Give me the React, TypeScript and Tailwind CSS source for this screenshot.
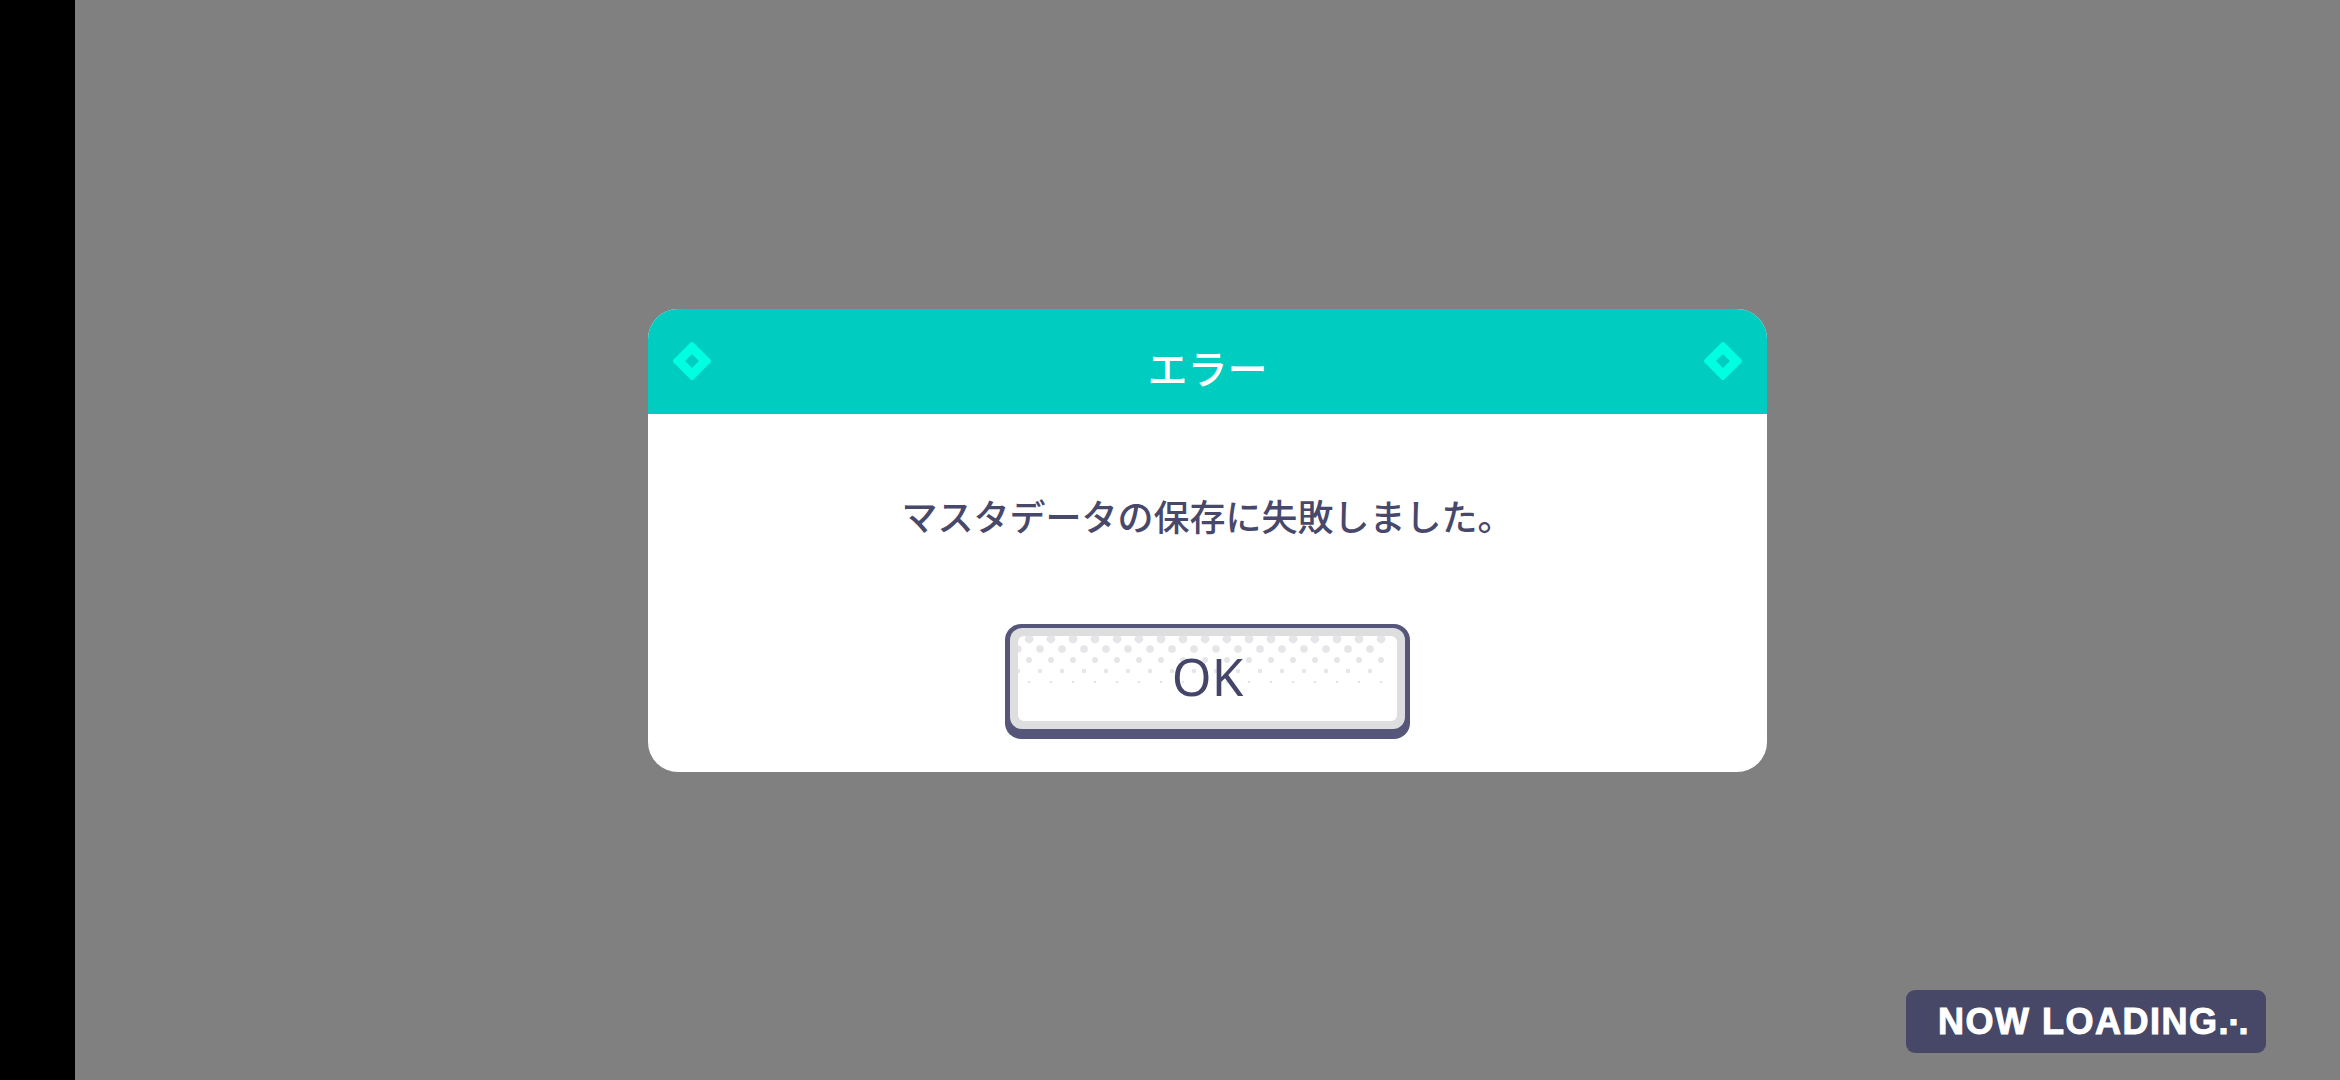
import React from "react";

function Diamond() {
  return (
    <svg width="40" height="40" viewBox="0 0 40 40">
      <path d="M20 3 L37 20 L20 37 L3 20 Z" fill="#00FFE1" strokeLinejoin="round" stroke="#00FFE1" strokeWidth="4" />
      <path d="M20 13 L27 20 L20 27 L13 20 Z" fill="#00CDBF" />
    </svg>
  );
}

function Dots() {
  const rows = [
    { y: 3, r: 4.4 },
    { y: 13, r: 3.8 },
    { y: 24, r: 3 },
    { y: 35, r: 2.2 },
    { y: 46, r: 1.3 },
  ];
  const circles: React.ReactNode[] = [];
  rows.forEach((row, i) => {
    const off = i % 2 === 0 ? 0 : 11;
    for (let x = -11 + off; x < 380; x += 22) {
      circles.push(<circle key={`${i}-${x}`} cx={x} cy={row.y} r={row.r} fill="#E6E6EA" />);
    }
  });
  return (
    <svg className="absolute left-0 top-0" width="369" height="60" viewBox="0 0 369 60">
      {circles}
    </svg>
  );
}

export default function App() {
  const loadFont = { fontFamily: '"Liberation Sans", Arial, sans-serif' };
  return (
    <div className="flex w-[2340px] h-[1080px] overflow-hidden" style={{ fontFamily: '"Noto Sans", "Noto Sans CJK JP", sans-serif' }}>
      <div className="w-[75px] h-full bg-black shrink-0" />
      <div className="relative flex-1 h-full bg-[#808080] flex items-center justify-center">
        <div className="w-[1119px] h-[463px] rounded-[30px] overflow-hidden bg-white flex flex-col">
          <div className="h-[105px] bg-[#00CDBF] flex items-center justify-between px-[24px] shrink-0">
            <Diamond />
            <div className="text-white text-[40px] font-medium leading-none pt-[12px]" style={{ fontFamily: '"Noto Sans CJK JP", sans-serif' }}>エラー</div>
            <Diamond />
          </div>
          <div className="flex flex-col items-center pt-[76px]">
            <div className="text-[#48486A] text-[36px] font-medium leading-[50px]" style={{ fontFamily: '"Noto Sans CJK JP", sans-serif' }}>
              マスタデータの保存に失敗しました。
            </div>
            <div className="mt-[84px] w-[405px] h-[115px] rounded-[16px] bg-[#56567A] pt-[4px] px-[5px] pb-[10px]">
              <div className="w-full h-full rounded-[12px] bg-[#DEDEDE] p-[8px]">
                <div className="relative w-full h-full rounded-[6px] bg-white overflow-hidden flex items-center justify-center">
                  <Dots />
                  <span className="relative text-[#45456A] text-[51px] leading-none pb-[4px]" style={{ fontFamily: '"Noto Sans", sans-serif' }}>OK</span>
                </div>
              </div>
            </div>
          </div>
        </div>
        <div className="absolute right-[74px] bottom-[27px] w-[360px] h-[63px] rounded-[9px] bg-[#474767] flex items-center pl-[32px]">
          <span className="text-white text-[36px] font-bold leading-none tracking-[1.5px] [-webkit-text-stroke:1px_white]" style={loadFont}>
            NOW LOADING
          </span>
          <span className="text-white text-[36px] font-bold leading-none [-webkit-text-stroke:1px_white]" style={loadFont}>.</span>
          <span className="text-white text-[36px] font-bold leading-none relative top-[-9px] [-webkit-text-stroke:1px_white]" style={loadFont}>.</span>
          <span className="text-white text-[36px] font-bold leading-none [-webkit-text-stroke:1px_white]" style={loadFont}>.</span>
        </div>
      </div>
    </div>
  );
}
